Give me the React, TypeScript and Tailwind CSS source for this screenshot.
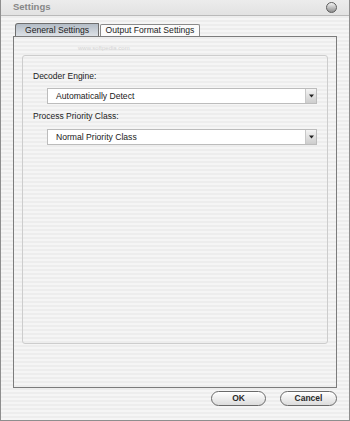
const stripes =
  'bg-[repeating-linear-gradient(180deg,#ededed_0px,#ededed_2px,#f5f5f5_2px,#f5f5f5_4px)]'

function ComboBox({ value }: { value: string }) {
  return (
    <div className="ml-[24px] mr-[10px] flex h-[16px] border border-[#bcbcbc] bg-white">
      <div className="flex flex-1 items-center pl-[8px] text-[8.6px] leading-none text-[#1a1a1a]">
        {value}
      </div>
      <div className="flex w-[11px] items-center justify-center border-l border-[#c8c8c8] bg-gradient-to-b from-[#f4f4f4] to-[#cdcdcd]">
        <svg width="5" height="4" viewBox="0 0 5 4">
          <path d="M0 0.5h5L2.5 3.5z" fill="#222" />
        </svg>
      </div>
    </div>
  )
}

function PillButton({ label, width }: { label: string; width: string }) {
  return (
    <button
      type="button"
      className={`${width} h-[15px] rounded-full border border-[#6a6a6a] bg-gradient-to-b from-white to-[#dcdcdc] text-[8.5px] font-bold leading-none text-[#2a2a2a] shadow-[inset_0_1px_0_#fff]`}
    >
      {label}
    </button>
  )
}

export default function App() {
  return (
    <div
      className={`flex h-[421px] w-[350px] flex-col border-x border-b border-[#8e8e8e] ${stripes}`}
      style={{ fontFamily: '"Liberation Sans", Arial, sans-serif' }}
    >
      {/* title bar */}
      <div className="flex h-[16px] items-center justify-between border-b border-[#b9b9b9] bg-gradient-to-b from-[#ececec] to-[#e2e2e2] pl-[12px] pr-[12px]">
        <span className="text-[9.5px] font-bold text-[#868686]">Settings</span>
        <div className="h-[11px] w-[11px] rounded-full border border-[#5c5c5c] bg-gradient-to-b from-[#f4f4f4] to-[#8f8f8f]" />
      </div>

      <div className="flex flex-1 flex-col px-[12px] pt-[7px]">
        {/* tabs */}
        <div className="flex h-[13px] items-end pl-[2px]">
          <div className="flex h-[13px] w-[84px] items-center justify-center rounded-tl-[3px] rounded-tr-[1px] border border-b-0 border-[#6e6e6e] bg-gradient-to-b from-[#b3bcc6] to-[#dde1e6] text-[8.6px] leading-none text-[#1c1c1c]">
            General Settings
          </div>
          <div className="ml-[1px] flex h-[12px] w-[100px] items-center justify-center rounded-t-[2px] border border-b-0 border-[#8a8a8a] bg-[#fbfbfb] text-[8.6px] leading-none text-[#1c1c1c]">
            Output Format Settings
          </div>
        </div>

        {/* tab panel */}
        <div className={`relative h-[352px] border border-[#7c7c7c] px-[8px] pt-[18px] ${stripes}`}>
          <span className="absolute left-[64px] top-[8px] text-[6px] leading-none text-[#d4d4d4]">
            www.softpedia.com
          </span>
          <div className="h-[289px] rounded-[3px] border border-[#cdcdcd]">
            <div className="pl-[10px] pt-[15px] text-[8.5px] leading-[10px] text-[#1c1c1c]">
              Decoder Engine:
            </div>
            <div className="mt-[7px]">
              <ComboBox value="Automatically Detect" />
            </div>
            <div className="mt-[7px] pl-[10px] text-[8.5px] leading-[10px] text-[#1c1c1c]">
              Process Priority Class:
            </div>
            <div className="mt-[8px]">
              <ComboBox value="Normal Priority Class" />
            </div>
          </div>
        </div>

        {/* footer buttons */}
        <div className="mt-[3px] flex justify-end gap-[14px]">
          <PillButton label="OK" width="w-[55px]" />
          <PillButton label="Cancel" width="w-[57px]" />
        </div>
      </div>
    </div>
  )
}
